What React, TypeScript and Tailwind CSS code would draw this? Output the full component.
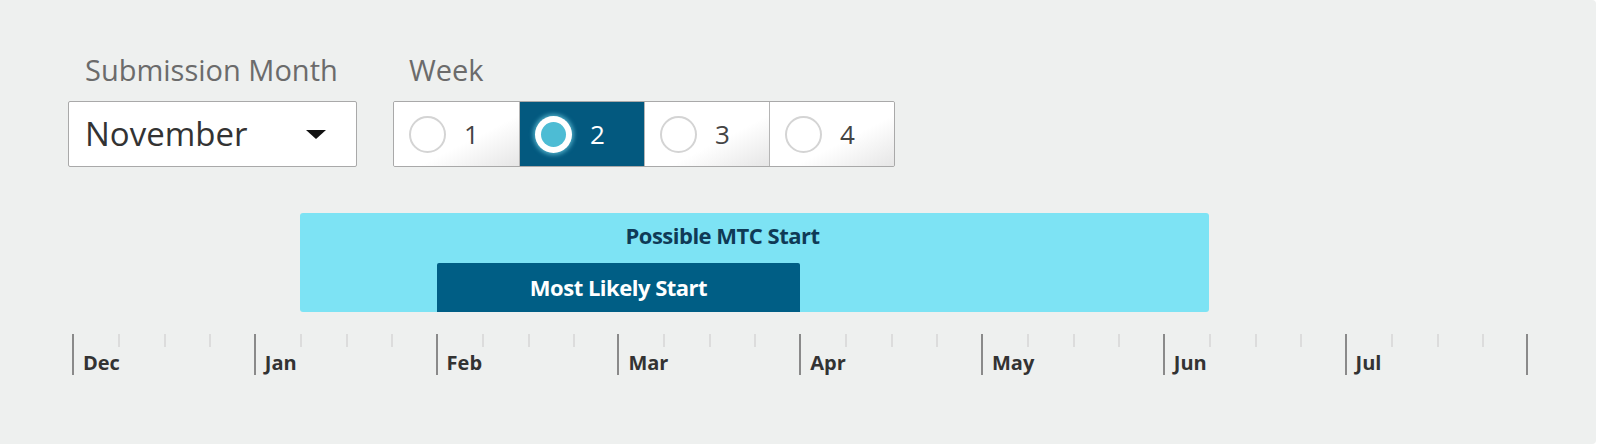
import { useState } from 'react';

const months = ['Dec', 'Jan', 'Feb', 'Mar', 'Apr', 'May', 'Jun', 'Jul'];

function Radio({ checked }: { checked: boolean }) {
  if (checked) {
    return (
      <span className="flex h-[37px] w-[37px] items-center justify-center rounded-full bg-white shadow-[0_0_4px_2px_rgba(120,220,240,0.6)]">
        <span className="h-[25px] w-[25px] rounded-full bg-[#4dbcd4]" />
      </span>
    );
  }
  return <span className="h-[37px] w-[37px] rounded-full border-2 border-[#d4d4d4] bg-white" />;
}

export default function App() {
  const [week, setWeek] = useState(2);

  return (
    <div className="flex h-[444px] w-[1600px] bg-white font-['Open_Sans',sans-serif]">
      <div className="h-full w-[1596px] rounded-r-[4px] bg-[#eef0ef] pl-[68px] pt-[52px]">
        <div className="flex gap-[36px]">
          <div>
            <div className="pl-[17px] text-[29px] leading-[36px] text-[#6b6b6b]">Submission Month</div>
            <div className="mt-[13px] flex h-[66px] w-[289px] items-center justify-between rounded-[2px] border border-[#a9a9a9] bg-white pl-[16px] pr-[30px]">
              <span className="text-[33px] text-[#333]">November</span>
              <span className="h-0 w-0 border-x-[10px] border-t-[9px] border-x-transparent border-t-[#111]" />
            </div>
          </div>
          <div>
            <div className="pl-[16px] text-[29px] leading-[36px] text-[#6b6b6b]">Week</div>
            <div className="mt-[13px] flex h-[66px] overflow-hidden rounded-[2px] border border-[#a9a9a9]">
              {[1, 2, 3, 4].map((n) => (
                <button
                  key={n}
                  onClick={() => setWeek(n)}
                  className={
                    'flex w-[125px] items-center gap-[18px] pl-[15px] text-[26px] ' +
                    (n > 1 ? 'border-l border-[#b5b5b5] ' : '') +
                    (week === n
                      ? 'bg-[#03597f] text-white'
                      : 'bg-gradient-to-br from-white from-60% to-[#e6e6e6] text-[#444]')
                  }
                >
                  <Radio checked={week === n} />
                  <span>{n}</span>
                </button>
              ))}
            </div>
          </div>
        </div>

        <div className="mt-[46px] w-[1470px] pl-[4px]">
          <div className="ml-[228px] flex h-[99px] w-[909px] flex-col rounded-[3px] bg-[#7de3f4]">
            <div className="pt-[8px] pr-[64px] text-center text-[22px] leading-[28px] font-bold tracking-[-0.5px] text-[#0f3a56]">
              Possible MTC Start
            </div>
            <div className="mt-auto ml-[137px] flex h-[49px] w-[363px] items-center justify-center rounded-t-[2px] bg-[#005e85] text-[22px] font-bold tracking-[-0.5px] text-white">
              Most Likely Start
            </div>
          </div>

          <div className="mt-[22px] flex">
            {months.map((m) => (
              <div key={m} className="flex h-[41px] w-[181.8px] border-l-2 border-[#8a8a8a]">
                <div className="flex flex-1 flex-col">
                  <div className="flex h-[13px] w-full">
                    <div className="w-[44px]" />
                    <div className="w-[46px] border-l-2 border-[#dcdcdc]" />
                    <div className="w-[45px] border-l-2 border-[#dcdcdc]" />
                    <div className="w-[45px] border-l-2 border-[#dcdcdc]" />
                  </div>
                  <div className="pl-[9px] pt-[4px] text-[20px] leading-[24px] font-bold text-[#333]">{m}</div>
                </div>
              </div>
            ))}
            <div className="h-[41px] border-l-2 border-[#8a8a8a]" />
          </div>
        </div>
      </div>
    </div>
  );
}
